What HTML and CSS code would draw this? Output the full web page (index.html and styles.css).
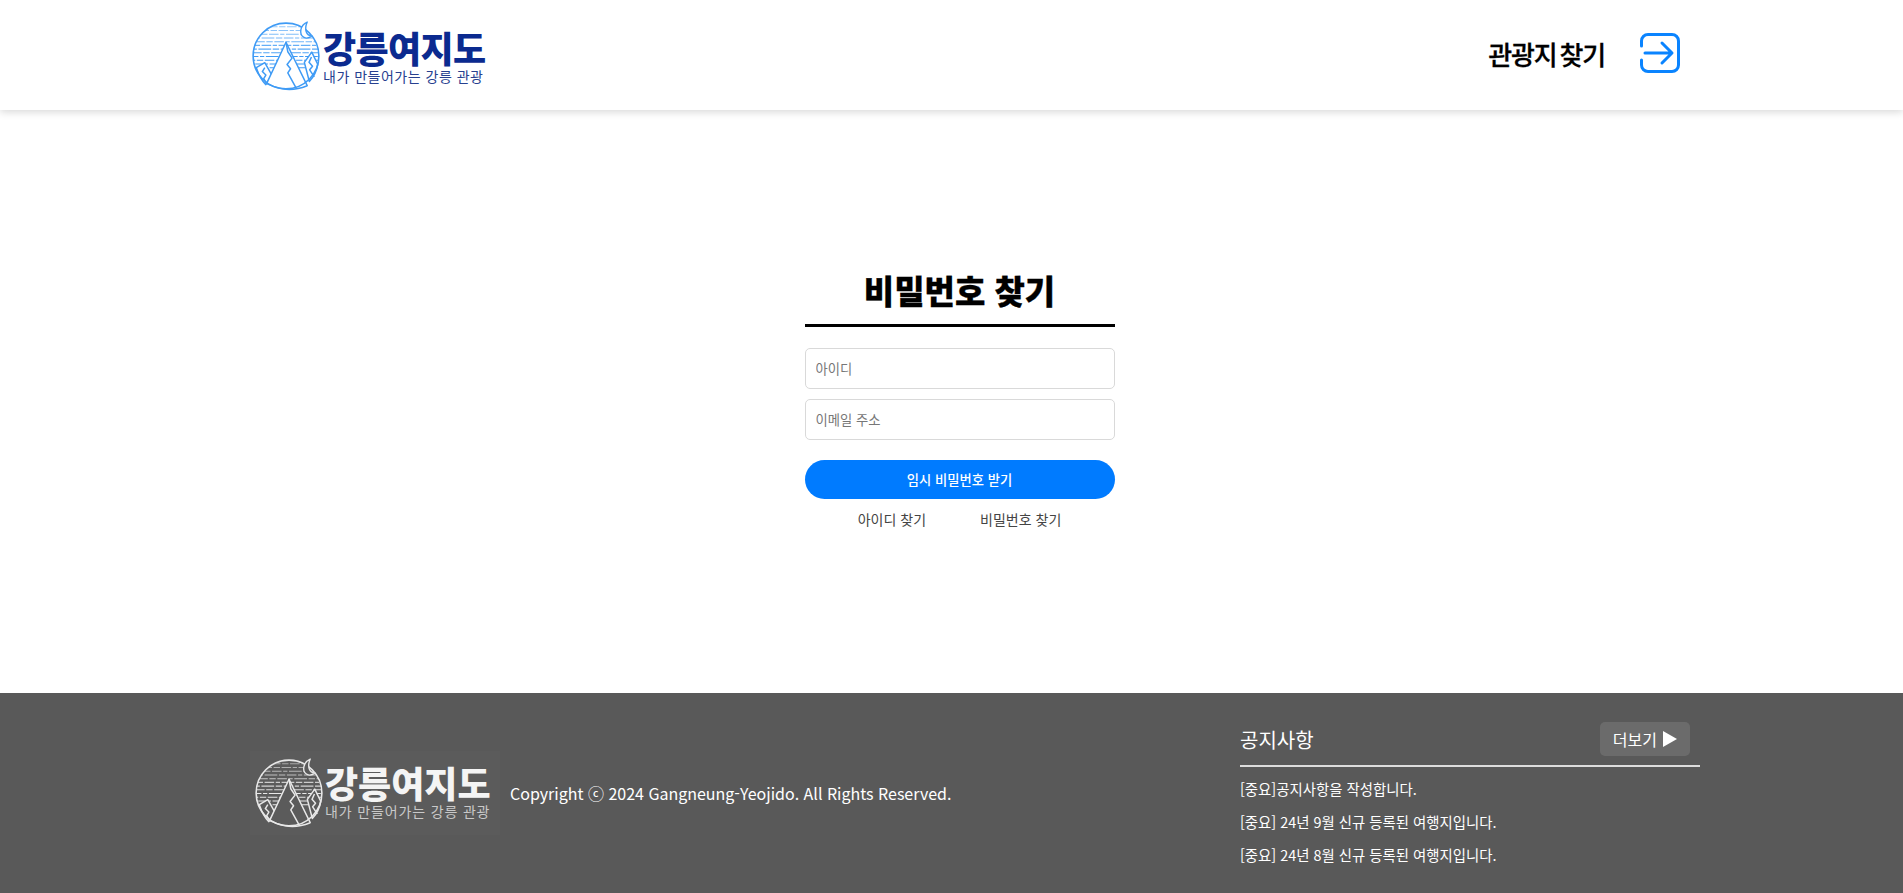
FILE: index.html
```html
<!DOCTYPE html>
<html lang="ko">
    <head>
        <meta charset="UTF-8"/>
        <title>비밀번호 찾기 - 강릉여지도</title>
        <link rel="stylesheet" href="styles.css">
    </head>

    <body>
        <svg class="defs" width="0" height="0">
            <defs>
                <clipPath id="disc">
                    <circle cx="33" cy="33" r="31"/>
                </clipPath>
                <symbol id="logoMark" viewBox="0 0 66 66">
                    <g clip-path="url(#disc)" fill="none" stroke="currentColor" stroke-width="1" stroke-dasharray="9 1.500 4 1.500 12 1.500 6 1.500">
                        <path d="M0 5.500H66" stroke-dashoffset="3" opacity=".55"/>
                        <path d="M0 9H66" stroke-dashoffset="11" opacity=".6"/>
                        <path d="M0 12.500H66" stroke-dashoffset="20" opacity=".65"/>
                        <path d="M0 16H66" stroke-dashoffset="6" opacity=".7"/>
                        <path d="M0 19.500H66" stroke-dashoffset="15" opacity=".75"/>
                        <path d="M0 23H66" stroke-dashoffset="27" opacity=".8"/>
                        <path d="M0 26.500H66" stroke-dashoffset="9" opacity=".85"/>
                        <path d="M0 30H66" stroke-dashoffset="18" opacity=".9"/>
                        <path d="M0 33.500H66" stroke-dashoffset="2"/>
                        <path d="M0 37H66" stroke-dashoffset="24"/>
                        <path d="M0 40.500H66" stroke-dashoffset="12"/>
                        <path d="M0 44H66" stroke-dashoffset="30"/>
                    </g>
                    <g fill="var(--mark-bg)" stroke="currentColor" stroke-width="1.400" stroke-linejoin="round">
                        <path d="M5 44L13 39.300L19.700 51L14 60C10 56 7 50 5 44Z" />
                        <path d="M13 44L10.700 47.700L14 51L12 54.300L14.700 59" fill="none"/>
                        <path d="M50.300 39L57.300 29.300L63 41C62 47 59 53 55 57Z"/>
                        <path d="M57 34L54.700 39L58 42.700L55.300 46L59.700 52.700" fill="none"/>
                        <path d="M14.700 59L33 20L53 61C48 63 38 65.500 30 64C24 63 19 61 14.700 59Z"/>
                        <path d="M33 20L34.700 29L38.700 35L34 41L37.300 45L34.700 49L43 64" fill="none"/>
                    </g>
                    <circle cx="33" cy="33" r="31" fill="none" stroke="currentColor" stroke-width="1.500"/>
                    <path d="M53 1C46 4 45 13 50 15.500C52 16.500 55 16 57.500 14C52 14 50 8 53 1Z" fill="var(--mark-bg)" stroke="currentColor" stroke-width="1.300" stroke-linejoin="round"/>
                </symbol>
            </defs>
        </svg>

        <header class="top-bar">
            <a class="logo logo-top" href="#">
                <svg class="logo-mark"><use href="#logoMark"/></svg>
                <span class="logo-text">
                    <span class="logo-name">강릉여지도</span>
                    <span class="logo-sub">내가 만들어가는 강릉 관광</span>
                </span>
            </a>
            <nav class="top-nav">
                <a class="nav-link" href="#">관광지 찾기</a>
                <a class="nav-icon" href="#">
                    <svg width="42" height="42" viewBox="0 0 42 42" fill="none" stroke="currentColor" stroke-width="3" stroke-linecap="round" stroke-linejoin="round">
                        <path d="M2.500 14V9A6.500 6.500 0 0 1 9 2.500H33A6.500 6.500 0 0 1 39.500 9V33A6.500 6.500 0 0 1 33 39.500H9A6.500 6.500 0 0 1 2.500 33V28"/>
                        <path d="M6 21H32M23 11L33 21L23 31"/>
                    </svg>
                </a>
            </nav>
        </header>

        <main class="content">
            <form class="find-form">
                <h1 class="find-title">비밀번호 찾기</h1>
                <input class="find-input" type="text" placeholder="아이디">
                <input class="find-input" type="text" placeholder="이메일 주소">
                <button class="find-btn" type="button">임시 비밀번호 받기</button>
                <div class="find-links">
                    <a href="#">아이디 찾기</a>
                    <a href="#">비밀번호 찾기</a>
                </div>
            </form>
        </main>

        <footer class="bottom-bar">
            <div class="bottom-left">
                <a class="logo logo-bottom" href="#">
                    <svg class="logo-mark"><use href="#logoMark"/></svg>
                    <span class="logo-text">
                        <span class="logo-name">강릉여지도</span>
                        <span class="logo-sub">내가 만들어가는 강릉 관광</span>
                    </span>
                </a>
                <p class="copyright">Copyright ⓒ 2024 Gangneung-Yeojido. All Rights Reserved.</p>
            </div>
            <section class="notice">
                <div class="notice-head">
                    <h2>공지사항</h2>
                    <a class="more-btn" href="#">더보기 <span class="more-arrow"></span></a>
                </div>
                <ul class="notice-list">
                    <li>[중요]공지사항을 작성합니다.</li>
                    <li>[중요] 24년 9월 신규 등록된 여행지입니다.</li>
                    <li>[중요] 24년 8월 신규 등록된 여행지입니다.</li>
                </ul>
            </section>
        </footer>
    </body>
</html>
```

FILE: styles.css
```css
*{
    box-sizing:border-box;
}
html,body{
    margin:0;
    padding:0;
}
body{
    display:flex;
    flex-direction:column;
    min-height:893px;
    background:#fff;
    color:#222;
    font-family:"Noto Sans CJK KR","Noto Sans",sans-serif;
}
a{
    color:inherit;
    text-decoration:none;
}
ul,li{
    list-style:none;
    margin:0;
    padding:0;
}
.defs{
    position:absolute;
}

/* logo */
.logo{
    display:flex;
    align-items:center;
}
.logo-mark{
    flex:none;
    width:70px;
    height:70px;
}
.logo-text{
    display:flex;
    flex-direction:column;
    white-space:nowrap;
}
.logo-name{
    font-weight:900;
    font-size:36px;
    line-height:39px;
    letter-spacing:-.6px;
}
.logo-sub{
    font-size:14px;
    line-height:18px;
    letter-spacing:.5px;
    font-weight:400;
}
.logo-top{
    --mark-bg:#fff;
    color:#3f9bf5;
    margin-left:251px;
    margin-top:6px;
}
.logo-top .logo-text{
    margin-left:2px;
}
.logo-top .logo-name{
    color:#0b2a8f;
}
.logo-top .logo-sub{
    color:#27408f;
}
.logo-bottom{
    --mark-bg:#5b5b5b;
    color:#e8e8e8;
    width:250px;
    height:84px;
    padding-left:4px;
    background:#5b5b5b;
}
.logo-bottom .logo-text{
    margin-left:1px;
    padding-bottom:4px;
}
.logo-bottom .logo-name{
    color:#f4f4f4;
    letter-spacing:0;
}
.logo-bottom .logo-sub{
    color:#c9c9c9;
    letter-spacing:.85px;
}

/* header */
.top-bar{
    display:flex;
    justify-content:space-between;
    align-items:center;
    height:110px;
    padding:0 222px 4px 0;
    background:#fff;
    box-shadow:0 2px 8px rgba(0,0,0,.16);
}
.top-nav{
    display:flex;
    align-items:center;
    gap:34px;
}
.nav-link{
    color:#000;
    font-size:26px;
    font-weight:500;
    letter-spacing:-1.200px;
    word-spacing:-3px;
    -webkit-text-stroke:.3px #000;
}
.nav-icon{
    display:flex;
    color:#0a84ff;
}

/* form */
.content{
    flex:1;
    display:flex;
    justify-content:center;
    padding:156px 0 0 16px;
}
.find-form{
    display:flex;
    flex-direction:column;
    width:310px;
}
.find-title{
    margin:0 0 21px;
    height:61px;
    border-bottom:3px solid #000;
    color:#000;
    text-align:center;
    font-size:33px;
    line-height:48px;
    font-weight:900;
    -webkit-text-stroke:.3px #000;
}
.find-input{
    height:41px;
    margin-bottom:10px;
    padding:0 10px;
    border:1px solid #d9d9d9;
    border-radius:5px;
    background:#fff;
    font-family:inherit;
    font-size:13.300px;
}
.find-input::placeholder{
    color:#777;
}
.find-btn{
    height:39px;
    margin-top:10px;
    border:none;
    border-radius:20px;
    background:#007bff;
    color:#fff;
    font-family:inherit;
    font-size:13.300px;
    font-weight:500;
}
.find-links{
    display:flex;
    justify-content:center;
    gap:54px;
    margin-top:9px;
    font-size:14px;
    line-height:22px;
    color:#444;
}

/* footer */
.bottom-bar{
    display:flex;
    justify-content:space-between;
    height:200px;
    padding:0 203px 0 250px;
    background:#595959;
    color:#fff;
}
.bottom-left{
    display:flex;
    align-items:center;
    gap:10px;
    height:200px;
}
.copyright{
    margin:0;
    font-size:16px;
    font-weight:400;
    color:#fff;
}
.notice{
    width:460px;
    padding-top:29px;
}
.notice-head{
    display:flex;
    justify-content:space-between;
    align-items:center;
    height:34px;
    padding:0 10px 9px 0;
    border-bottom:2px solid #ddd;
    box-sizing:content-box;
}
.notice-head h2{
    margin:0;
    font-size:20px;
    font-weight:400;
}
.more-btn{
    display:flex;
    align-items:center;
    gap:6px;
    height:34px;
    padding:0 13px;
    border-radius:5px;
    background:#6b6b6b;
    font-size:16px;
}
.more-arrow{
    width:0;
    height:0;
    border-left:14px solid #fff;
    border-top:8px solid transparent;
    border-bottom:8px solid transparent;
}
.notice-list{
    margin-top:5px;
}
.notice-list li{
    height:33px;
    line-height:33px;
    font-size:14.400px;
    font-weight:400;
    color:#fff;
}
```
